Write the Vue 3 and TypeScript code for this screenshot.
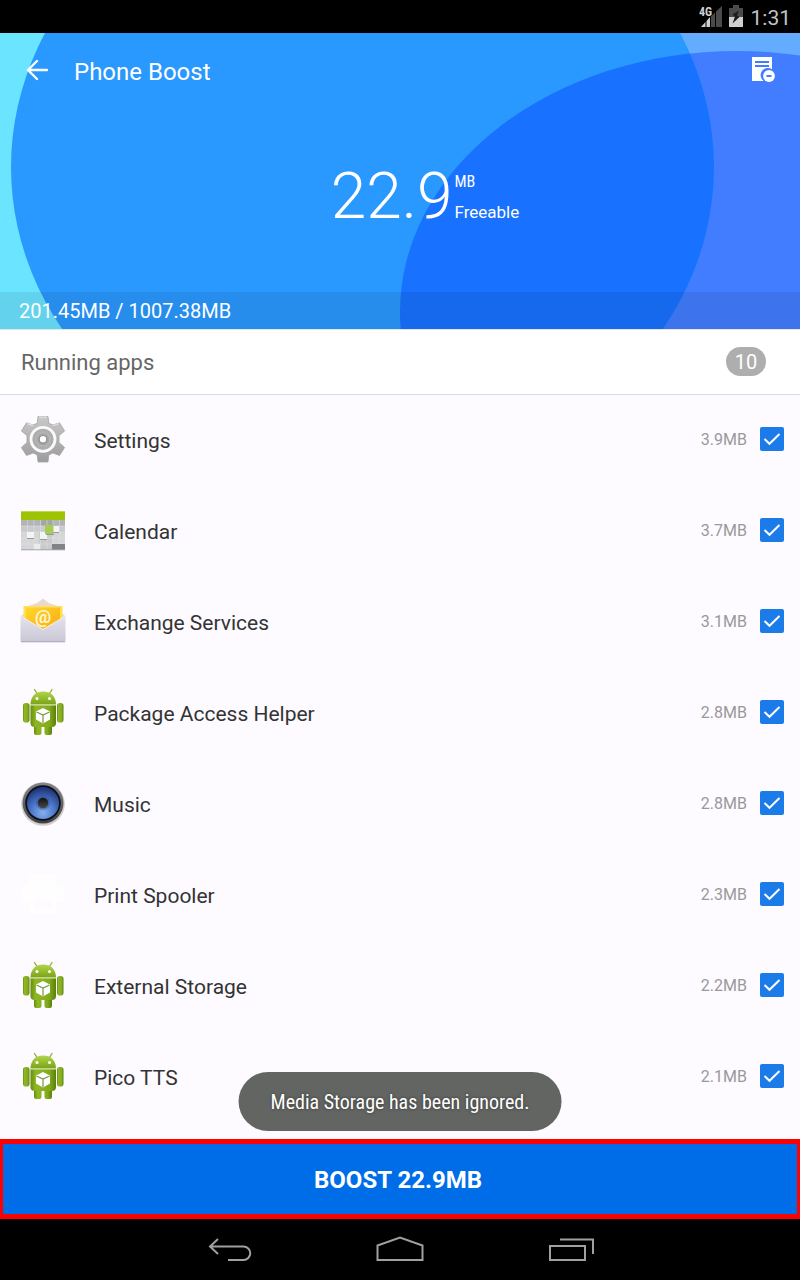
<script setup lang="ts">
import { ref } from 'vue'

type IconName = 'gear' | 'calendar' | 'mail' | 'android' | 'speaker' | 'printer'

interface RunningApp {
  id: string
  name: string
  size: string
  icon: IconName
  checked: boolean
}

const apps = ref<RunningApp[]>([
  { id: 'settings', name: 'Settings', size: '3.9MB', icon: 'gear', checked: true },
  { id: 'calendar', name: 'Calendar', size: '3.7MB', icon: 'calendar', checked: true },
  { id: 'exchange', name: 'Exchange Services', size: '3.1MB', icon: 'mail', checked: true },
  { id: 'package', name: 'Package Access Helper', size: '2.8MB', icon: 'android', checked: true },
  { id: 'music', name: 'Music', size: '2.8MB', icon: 'speaker', checked: true },
  { id: 'print', name: 'Print Spooler', size: '2.3MB', icon: 'printer', checked: true },
  { id: 'storage', name: 'External Storage', size: '2.2MB', icon: 'android', checked: true },
  { id: 'pico', name: 'Pico TTS', size: '2.1MB', icon: 'android', checked: true },
])
</script>

<template>
  <div class="screen">
    <div class="status">
      <svg class="signal" width="24" height="24" viewBox="0 0 24 24" aria-hidden="true">
        <path d="M12 23V12.500L16 8.500V23zM17 23V7.500L23 2V23z" fill="#4a4a4a" />
        <path d="M2 23L6.500 18V23zM7.500 23V17L11 13V23z" fill="#d0d0d0" />
        <text x="0" y="12" class="signal-text">4G</text>
      </svg>
      <svg width="14" height="22" viewBox="0 0 14 22" aria-hidden="true">
        <path d="M4 0h6v3h4v19H0V3h4z" fill="#4a4a4a" />
        <path d="M0 12h14v10H0z" fill="#cfcfcf" />
        <path d="M10 5.500L3.500 9.500L6 11.500L3.500 18.500L10.500 12L8 10.500z" fill="#1c1c1c" />
      </svg>
      <span class="clock">1:31</span>
    </div>

    <header class="hero">
      <svg class="hero-art" viewBox="0 0 800 296" preserveAspectRatio="none" aria-hidden="true">
        <defs>
          <clipPath id="big-disc"><ellipse cx="362.500" cy="134" rx="351.500" ry="312" /></clipPath>
        </defs>
        <rect width="400" height="296" fill="#6be4ff" />
        <rect x="400" width="400" height="296" fill="#63acff" />
        <ellipse cx="737" cy="279" rx="337" ry="261" fill="#427dff" />
        <ellipse cx="362.500" cy="134" rx="351.500" ry="312" fill="#2998ff" />
        <ellipse cx="737" cy="279" rx="337" ry="261" fill="#1871ff" clip-path="url(#big-disc)" />
      </svg>
      <div class="toolbar">
        <button class="icon-button" type="button" aria-label="Back">
          <svg width="24" height="24" viewBox="0 0 24 24" fill="none" stroke="#fff" stroke-width="2.400" stroke-linecap="round">
            <path d="M13 3L4 12L13 21M4 12H23" />
          </svg>
        </button>
        <h1>Phone Boost</h1>
        <button class="icon-button" type="button" aria-label="Ignore list">
          <svg width="24" height="26" viewBox="0 0 24 26">
            <path d="M0 0H20V12.300A7 7 0 0 0 11.600 24H0z" fill="#fff" />
            <path d="M3 5H17M3 9H17" stroke="#427dff" stroke-width="1.800" />
            <circle cx="17" cy="19" r="5.900" fill="#fff" />
            <path d="M14.500 19H19.500" stroke="#427dff" stroke-width="2" />
          </svg>
        </button>
      </div>
      <div class="total">
        <span class="total-number">22.9</span>
        <span class="total-side">
          <span class="total-unit">MB</span>
          <span class="total-note">Freeable</span>
        </span>
      </div>
      <div class="memory">201.45MB / 1007.38MB</div>
    </header>

    <main class="content">
      <div class="section-head">
        <h2>Running apps</h2>
        <span class="count">10</span>
      </div>

      <ul class="apps">
        <li v-for="app in apps" :key="app.id" class="app">
          <svg class="app-icon" width="48" height="48" viewBox="0 0 48 48" aria-hidden="true">
            <template v-if="app.icon === 'gear'">
              <defs>
                <linearGradient id="gear-metal" x1="0" y1="0" x2="0" y2="1">
                  <stop offset="0" stop-color="#c9c9c9" />
                  <stop offset="1" stop-color="#9c9c9c" />
                </linearGradient>
              </defs>
              <g fill="url(#gear-metal)" stroke="#a3a3a3" stroke-width=".8" stroke-linejoin="round">
                <path d="M19 1.500H29L29.800 8.300L33.800 10L40.500 7.800L45.600 16L40 20.500V27.500L45.600 32.500L40.500 40.500L33.800 38L29.800 40L29 47H19L18.200 40L14.200 38L7.500 40.500L2.400 32.500L8 27.500V20.500L2.400 16L7.500 7.800L14.200 10L18.200 8.300z" />
              </g>
              <path d="M20 2.200H28M8.500 8.600L14.200 10.800M39.500 8.600L33.800 10.800" stroke="#e4e4e4" stroke-width="1.200" />
              <circle cx="24" cy="24.300" r="12" fill="#adadad" stroke="#fafafa" stroke-width="2.800" />
              <circle cx="24" cy="24.300" r="7" fill="#a6a6a6" stroke="#b4b4b4" stroke-width="2" />
              <circle cx="24" cy="24.300" r="3.800" fill="#fdfdfd" stroke="#8e8e8e" stroke-width="1.200" />
            </template>

            <template v-else-if="app.icon === 'calendar'">
              <rect x="2" y="5" width="44" height="39" rx="1" fill="#c9cacb" />
              <path d="M2 14H46V20H2z" fill="#b3b4b5" />
              <path d="M2 26H20V44H2zM33 26H46V38H33z" fill="#d5d6d7" />
              <path d="M22 14H34V20H22z" fill="#a5a6a7" />
              <path d="M8.500 14V44M15 14V44M21.500 14V44M28 14V44M34 14V44M40.500 14V44M2 20H46M2 26H46M2 32H46M2 38H46" stroke="#e2e3e4" stroke-width=".5" />
              <path d="M8 26h7v6H8zM21 26h7v7h-7zM34 20h6v6h-6z" fill="#f4f4f4" />
              <path d="M15 38h6v6h-6z" fill="#ebebeb" />
              <path d="M8 32.500h7M21 33.500h7M34 26.500h6M27 28.500h8" stroke="#999" stroke-width="1" />
              <rect x="26" y="19" width="8.500" height="9" fill="#a5cd55" />
              <path d="M33 38H46V44H33z" fill="#818384" />
              <rect x="2" y="5" width="44" height="9" rx="1" fill="#9dc302" />
              <path d="M2 5.500H46" stroke="#bdd94f" />
              <path d="M2 43.800H46" stroke="#a3a5a6" />
            </template>

            <template v-else-if="app.icon === 'mail'">
              <defs>
                <linearGradient id="mail-paper" x1="0" y1="0" x2="1" y2="1">
                  <stop offset="0" stop-color="#ffd829" />
                  <stop offset="1" stop-color="#f9ab13" />
                </linearGradient>
                <linearGradient id="mail-front" x1="0" y1="0" x2="0" y2="1">
                  <stop offset="0" stop-color="#e4e2ec" />
                  <stop offset="1" stop-color="#c9c7d4" />
                </linearGradient>
              </defs>
              <path d="M2 19L24 1.500L46 19V30H2z" fill="#ded9e0" />
              <path d="M4.500 9H43.500V30H4.500z" fill="#ffe04f" />
              <path d="M7 10.500H41V32H7z" fill="url(#mail-paper)" />
              <path d="M8 9.500L24 4L40 9.500z" fill="#eed9bd" />
              <text x="24" y="26" class="at-sign">@</text>
              <path d="M1.500 19L24 32.500L46.500 19V43.500Q46.500 45 45 45H3Q1.500 45 1.500 43.500z" fill="url(#mail-front)" />
              <path d="M1.500 19L24 32.500L46.500 19" fill="none" stroke="#f2f0f6" />
              <path d="M2 44.800H46" stroke="#aaa8b4" />
            </template>

            <template v-else-if="app.icon === 'android'">
              <defs>
                <linearGradient id="droid-body" x1="0" y1="0" x2="1" y2="0">
                  <stop offset="0" stop-color="#648c10" />
                  <stop offset=".2" stop-color="#8fb725" />
                  <stop offset=".75" stop-color="#82aa1b" />
                  <stop offset="1" stop-color="#58800b" />
                </linearGradient>
                <linearGradient id="droid-head" x1="0" y1="0" x2="0" y2="1">
                  <stop offset="0" stop-color="#b2d649" />
                  <stop offset="1" stop-color="#7aa218" />
                </linearGradient>
              </defs>
              <path d="M18 5.500L15.500 1.500M30.500 5.500L33 1.500" stroke="#91b13a" stroke-width="1.400" stroke-linecap="round" />
              <path d="M15 33h7.500v12q0 2-2 2H17q-2 0-2-2zM25.500 33H33v12q0 2-2 2h-3.500q-2 0-2-2z" fill="url(#droid-body)" />
              <rect x="4" y="15" width="6.500" height="19.500" rx="2.800" fill="url(#droid-body)" />
              <rect x="38" y="15" width="6.500" height="19.500" rx="2.800" fill="url(#droid-body)" />
              <path d="M11.500 17.200H37V35Q37 39 33 39H15.500Q11.500 39 11.500 35z" fill="url(#droid-body)" />
              <path d="M11.500 16.500C11.500 8 17 3.500 24.200 3.500S37 8 37 16.500z" fill="url(#droid-head)" />
              <path d="M11.500 16.900H37" stroke="#c9dd8c" stroke-width=".8" />
              <circle cx="18" cy="10.500" r="1.500" fill="#fff" />
              <circle cx="30.500" cy="10.500" r="1.500" fill="#fff" />
              <path d="M24 20L31 23.500V31.500L24 35.500L17 31.500V23.500z" fill="#fff" />
              <path d="M17.500 24L24 27L30.500 24M24 27V35" fill="none" stroke="#77964a" stroke-width="1.200" />
            </template>

            <template v-else-if="app.icon === 'speaker'">
              <defs>
                <radialGradient id="cone" cx=".5" cy=".8" r=".75">
                  <stop offset="0" stop-color="#87b0ed" />
                  <stop offset=".5" stop-color="#4c76c8" />
                  <stop offset="1" stop-color="#20377a" />
                </radialGradient>
                <linearGradient id="rim" x1="0" y1="0" x2="0" y2="1">
                  <stop offset="0" stop-color="#868686" />
                  <stop offset="1" stop-color="#404040" />
                </linearGradient>
                <linearGradient id="cap" x1="0" y1="0" x2="0" y2="1">
                  <stop offset="0" stop-color="#111" />
                  <stop offset="1" stop-color="#4a4a4a" />
                </linearGradient>
              </defs>
              <circle cx="24" cy="25" r="21.800" fill="#000" opacity=".18" />
              <circle cx="24" cy="24" r="20.500" fill="url(#rim)" />
              <circle cx="24" cy="24" r="17.800" fill="#0b0f1c" />
              <circle cx="24" cy="24" r="16" fill="url(#cone)" />
              <circle cx="24" cy="24" r="7" fill="#23448e" opacity=".35" />
              <circle cx="24" cy="24" r="5.200" fill="url(#cap)" />
            </template>

            <template v-else>
              <path d="M10 4H37V15H41Q45 15 45 20V32H37V44H10V32H2V20Q2 15 6 15H10z" fill="#fffeff" />
              <path d="M15 30H32V39H15z" fill="#fefbfe" />
            </template>
          </svg>
          <label class="app-name" :for="'pick-' + app.id">{{ app.name }}</label>
          <span class="app-size">{{ app.size }}</span>
          <span class="tick">
            <input :id="'pick-' + app.id" v-model="app.checked" type="checkbox" />
            <svg v-if="app.checked" class="tick-mark" viewBox="0 0 24 24" aria-hidden="true">
              <path d="M4.500 12L9.500 16.800L19.500 7" fill="none" stroke="#fff" stroke-width="2" />
            </svg>
          </span>
        </li>
      </ul>

      <div class="toast" role="status">Media Storage has been ignored.</div>
    </main>

    <button class="boost" type="button">BOOST 22.9MB</button>

    <nav class="system-nav">
      <button type="button" aria-label="Back">
        <svg width="48" height="30" viewBox="0 0 48 30">
          <path d="M13 4L5 11.500L13 19M5 11.500H38.500A6.500 6.500 0 0 1 38.500 25H23" />
        </svg>
      </button>
      <button type="button" aria-label="Home">
        <svg width="48" height="30" viewBox="0 0 48 30">
          <path d="M1.500 25V10.500L24 2.500L46.500 10.500V25z" />
        </svg>
      </button>
      <button type="button" aria-label="Recent apps">
        <svg width="48" height="30" viewBox="0 0 48 30">
          <path d="M3 11H38V25H3zM13 4.500H46V19" />
        </svg>
      </button>
    </nav>
  </div>
</template>

<style>
body {
  margin: 0;
  background: #000;
}
</style>

<style scoped>
.screen {
  display: flex;
  flex-direction: column;
  min-height: 100vh;
  font-family: Roboto, "Liberation Sans", sans-serif;
  background: #fdfbff;
}

button {
  padding: 0;
  border: 0;
  background: none;
  font: inherit;
  cursor: pointer;
}

svg {
  display: block;
}

.status {
  display: flex;
  align-items: center;
  justify-content: flex-end;
  gap: 6px;
  box-sizing: border-box;
  height: 33px;
  padding: 0 9px 2px 0;
  background: #000;
}

.signal-text {
  font: 700 12px "Roboto Condensed", "Liberation Sans Narrow", Roboto, sans-serif;
  fill: #d0d0d0;
}

.clock {
  padding: 4px 0 0 2px;
  color: #c4c4c4;
  font-size: 21px;
  line-height: 24px;
}

.hero {
  position: relative;
  display: flex;
  flex-direction: column;
  height: 296px;
  color: #fff;
}

.hero-art {
  position: absolute;
  inset: 0;
  width: 100%;
  height: 100%;
}

.toolbar,
.total,
.memory {
  position: relative;
}

.toolbar {
  display: flex;
  align-items: center;
  height: 74px;
  padding: 0 24px;
}

.toolbar h1 {
  flex: 1;
  margin: 0;
  padding: 4px 0 0 26px;
  font-size: 24px;
  font-weight: 400;
  line-height: 30px;
}

.total {
  flex: 1;
  display: flex;
  align-items: flex-start;
  justify-content: center;
  gap: 2px;
  padding: 52px 0 0 50px;
}

.total-number {
  font-size: 64px;
  font-weight: 300;
  line-height: 76px;
}

.total-side {
  display: flex;
  flex-direction: column;
  gap: 6px;
  padding-top: 11px;
  font-size: 17px;
  line-height: 24px;
}

.total-unit {
  font-family: "Roboto Condensed", "Liberation Sans Narrow", Roboto, sans-serif;
  font-size: 16px;
}

.memory {
  box-sizing: border-box;
  height: 37px;
  padding: 1px 19px 0;
  background: rgba(0, 0, 0, 0.07);
  font-size: 20px;
  line-height: 36px;
}

.content {
  position: relative;
  flex: 1;
}

.section-head {
  display: flex;
  align-items: center;
  justify-content: space-between;
  box-sizing: border-box;
  height: 66px;
  padding: 0 34px 2px 21px;
  border-top: 1px solid #e4e6ef;
  border-bottom: 1px solid #dcdbe0;
  background: #fff;
}

.section-head h2 {
  margin: 0;
  padding-top: 4px;
  color: #666;
  font-size: 22px;
  font-weight: 400;
  line-height: 28px;
}

.count {
  width: 40px;
  padding-top: 1px;
  border-radius: 15px;
  background: #aeaeae;
  color: #fff;
  font-size: 20px;
  line-height: 28px;
  text-align: center;
}

.apps {
  margin: 0;
  padding: 0;
  list-style: none;
}

.app {
  display: flex;
  align-items: center;
  box-sizing: border-box;
  height: 91px;
  padding: 0 16px 3px 19px;
}

.app-name {
  flex: 1;
  padding: 3px 0 0 27px;
  color: #333;
  font-size: 21px;
  line-height: 28px;
}

.app-size {
  padding: 1px 13px 0 0;
  color: #999;
  font-size: 16px;
  line-height: 20px;
}

.tick {
  position: relative;
  width: 24px;
  height: 24px;
}

.tick input {
  display: block;
  box-sizing: border-box;
  width: 24px;
  height: 24px;
  margin: 0;
  border: 2px solid #8a8a8a;
  border-radius: 2px;
  appearance: none;
}

.tick input:checked {
  border: 0;
  background: #1b7be8;
}

.tick-mark {
  position: absolute;
  inset: 0;
  pointer-events: none;
}

.at-sign {
  font: 700 18px Roboto, sans-serif;
  fill: #fff6d6;
  text-anchor: middle;
}

.toast {
  position: absolute;
  bottom: 8px;
  left: 50%;
  box-sizing: border-box;
  padding: 2px 32px 0;
  border-radius: 30px;
  background: #636562;
  color: #fff;
  font-family: "Roboto Condensed", "Liberation Sans Narrow", Roboto, sans-serif;
  font-size: 20px;
  line-height: 57px;
  text-shadow: 0 0 3px #333;
  white-space: nowrap;
  transform: translateX(-50%);
}

.boost {
  height: 80px;
  padding: 2px 4px 0 0;
  border: solid #f00;
  border-width: 5px 3px;
  background: #006de8;
  color: #fff;
  font-size: 24px;
  font-weight: 700;
}

.system-nav {
  display: flex;
  justify-content: center;
  height: 61px;
  background: #000;
}

.system-nav button {
  display: flex;
  align-items: center;
  justify-content: center;
  width: 171px;
}

.system-nav path {
  fill: none;
  stroke: #a0a0a0;
  stroke-width: 2;
}
</style>
